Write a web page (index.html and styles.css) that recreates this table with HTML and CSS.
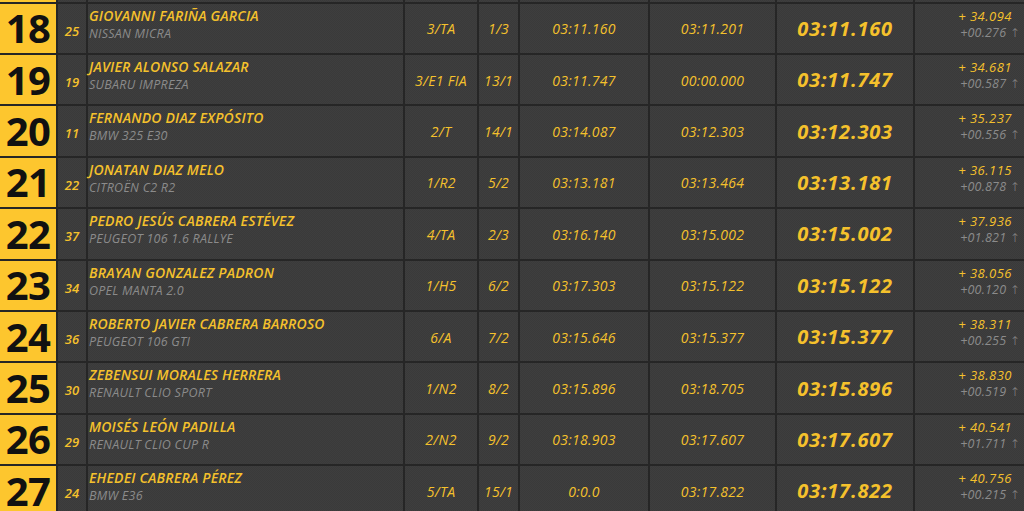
FILE: index.html
```html
<!DOCTYPE html>
<html lang="es">
<head>
<meta charset="utf-8">
<title>Clasificación</title>
<link rel="stylesheet" href="styles.css">
</head>
<body>
<div class="board">
  <div class="row stub">
    <div class="pos"></div><div></div><div></div><div></div><div></div><div></div><div></div><div></div><div></div>
  </div>
  <div class="row">
    <div class="pos">18</div><div class="num">25</div>
    <div class="driver"><div class="name">GIOVANNI FARIÑA GARCIA</div><div class="car">NISSAN MICRA</div></div>
    <div class="cell">3/TA</div><div class="cell">1/3</div><div class="cell">03:11.160</div><div class="cell">03:11.201</div>
    <div class="best">03:11.160</div>
    <div class="diff"><div class="gap">+ 34.094</div><div class="prev">+00.276 <span class="arrow">↑</span></div></div>
  </div>
  <div class="row">
    <div class="pos">19</div><div class="num">19</div>
    <div class="driver"><div class="name">JAVIER ALONSO SALAZAR</div><div class="car">SUBARU IMPREZA</div></div>
    <div class="cell">3/E1 FIA</div><div class="cell">13/1</div><div class="cell">03:11.747</div><div class="cell">00:00.000</div>
    <div class="best">03:11.747</div>
    <div class="diff"><div class="gap">+ 34.681</div><div class="prev">+00.587 <span class="arrow">↑</span></div></div>
  </div>
  <div class="row">
    <div class="pos">20</div><div class="num">11</div>
    <div class="driver"><div class="name">FERNANDO DIAZ EXPÓSITO</div><div class="car">BMW 325 E30</div></div>
    <div class="cell">2/T</div><div class="cell">14/1</div><div class="cell">03:14.087</div><div class="cell">03:12.303</div>
    <div class="best">03:12.303</div>
    <div class="diff"><div class="gap">+ 35.237</div><div class="prev">+00.556 <span class="arrow">↑</span></div></div>
  </div>
  <div class="row">
    <div class="pos">21</div><div class="num">22</div>
    <div class="driver"><div class="name">JONATAN DIAZ MELO</div><div class="car">CITROËN C2 R2</div></div>
    <div class="cell">1/R2</div><div class="cell">5/2</div><div class="cell">03:13.181</div><div class="cell">03:13.464</div>
    <div class="best">03:13.181</div>
    <div class="diff"><div class="gap">+ 36.115</div><div class="prev">+00.878 <span class="arrow">↑</span></div></div>
  </div>
  <div class="row">
    <div class="pos">22</div><div class="num">37</div>
    <div class="driver"><div class="name">PEDRO JESÚS CABRERA ESTÉVEZ</div><div class="car">PEUGEOT 106 1.6 RALLYE</div></div>
    <div class="cell">4/TA</div><div class="cell">2/3</div><div class="cell">03:16.140</div><div class="cell">03:15.002</div>
    <div class="best">03:15.002</div>
    <div class="diff"><div class="gap">+ 37.936</div><div class="prev">+01.821 <span class="arrow">↑</span></div></div>
  </div>
  <div class="row">
    <div class="pos">23</div><div class="num">34</div>
    <div class="driver"><div class="name">BRAYAN GONZALEZ PADRON</div><div class="car">OPEL MANTA 2.0</div></div>
    <div class="cell">1/H5</div><div class="cell">6/2</div><div class="cell">03:17.303</div><div class="cell">03:15.122</div>
    <div class="best">03:15.122</div>
    <div class="diff"><div class="gap">+ 38.056</div><div class="prev">+00.120 <span class="arrow">↑</span></div></div>
  </div>
  <div class="row">
    <div class="pos">24</div><div class="num">36</div>
    <div class="driver"><div class="name">ROBERTO JAVIER CABRERA BARROSO</div><div class="car">PEUGEOT 106 GTI</div></div>
    <div class="cell">6/A</div><div class="cell">7/2</div><div class="cell">03:15.646</div><div class="cell">03:15.377</div>
    <div class="best">03:15.377</div>
    <div class="diff"><div class="gap">+ 38.311</div><div class="prev">+00.255 <span class="arrow">↑</span></div></div>
  </div>
  <div class="row">
    <div class="pos">25</div><div class="num">30</div>
    <div class="driver"><div class="name">ZEBENSUI MORALES HERRERA</div><div class="car">RENAULT CLIO SPORT</div></div>
    <div class="cell">1/N2</div><div class="cell">8/2</div><div class="cell">03:15.896</div><div class="cell">03:18.705</div>
    <div class="best">03:15.896</div>
    <div class="diff"><div class="gap">+ 38.830</div><div class="prev">+00.519 <span class="arrow">↑</span></div></div>
  </div>
  <div class="row">
    <div class="pos">26</div><div class="num">29</div>
    <div class="driver"><div class="name">MOISÉS LEÓN PADILLA</div><div class="car">RENAULT CLIO CUP R</div></div>
    <div class="cell">2/N2</div><div class="cell">9/2</div><div class="cell">03:18.903</div><div class="cell">03:17.607</div>
    <div class="best">03:17.607</div>
    <div class="diff"><div class="gap">+ 40.541</div><div class="prev">+01.711 <span class="arrow">↑</span></div></div>
  </div>
  <div class="row">
    <div class="pos">27</div><div class="num">24</div>
    <div class="driver"><div class="name">EHEDEI CABRERA PÉREZ</div><div class="car">BMW E36</div></div>
    <div class="cell">5/TA</div><div class="cell">15/1</div><div class="cell">0:0.0</div><div class="cell">03:17.822</div>
    <div class="best">03:17.822</div>
    <div class="diff"><div class="gap">+ 40.756</div><div class="prev">+00.215 <span class="arrow">↑</span></div></div>
  </div>
</div>
</body>
</html>
```
FILE: styles.css
```css
html, body {
  margin: 0;
  padding: 0;
  background: #262626;
  overflow: hidden;
}
body {
  font-family: "Open Sans", "DejaVu Sans", sans-serif;
  color: #f5c12c;
}
.board {
  display: flex;
  flex-direction: column;
  gap: 2px;
}
.row {
  display: grid;
  grid-template-columns: 56px 28px 315px 72px 39px 128px 125px 136px 1fr;
  column-gap: 2px;
  height: 49.4px;
  flex: none;
}
.row.stub {
  height: 1.6px;
}
.row > div {
  background-color: #3c3c3c;
  background-image: repeating-conic-gradient(#3e3e3e 0 25%, #3a3a3a 0 50%);
  background-size: 2px 2px;
  min-width: 0;
}
.row > .pos {
  background: #fdc62e;
  color: #111;
  font-weight: 700;
  font-size: 40px;
  line-height: 1;
  display: flex;
  align-items: center;
  justify-content: center;
  letter-spacing: -0.5px;
}
.num {
  font-style: italic;
  font-weight: 600;
  font-size: 13px;
  line-height: 16px;
  text-align: center;
  padding-top: 19px;
  box-sizing: border-box;
}
.driver {
  padding: 3px 0 0 1px;
  font-style: italic;
  white-space: nowrap;
}
.name {
  font-size: 14px;
  font-weight: 600;
  line-height: 18px;
  letter-spacing: 0.2px;
}
.car {
  font-size: 12.5px;
  font-weight: 400;
  color: #8b8b8b;
  line-height: 17px;
  letter-spacing: 0.25px;
}
.cell, .best {
  display: flex;
  align-items: center;
  justify-content: center;
  font-style: italic;
  white-space: nowrap;
}
.cell {
  font-size: 14px;
  font-weight: 400;
  letter-spacing: 0.3px;
  padding-top: 1px;
}
.best {
  font-size: 20px;
  font-weight: 700;
  letter-spacing: 0.8px;
}
.diff {
  font-style: italic;
  text-align: right;
  padding: 4px 4px 0 0;
  box-sizing: border-box;
}
.gap {
  font-size: 13px;
  line-height: 17px;
  letter-spacing: 0.5px;
  padding-right: 8px;
}
.prev {
  font-size: 12.5px;
  line-height: 16px;
  color: #8b8b8b;
  letter-spacing: 0.2px;
}
.arrow {
  font-style: normal;
  font-family: "DejaVu Sans", sans-serif;
  font-size: 12px;
  font-weight: 300;
}
```
